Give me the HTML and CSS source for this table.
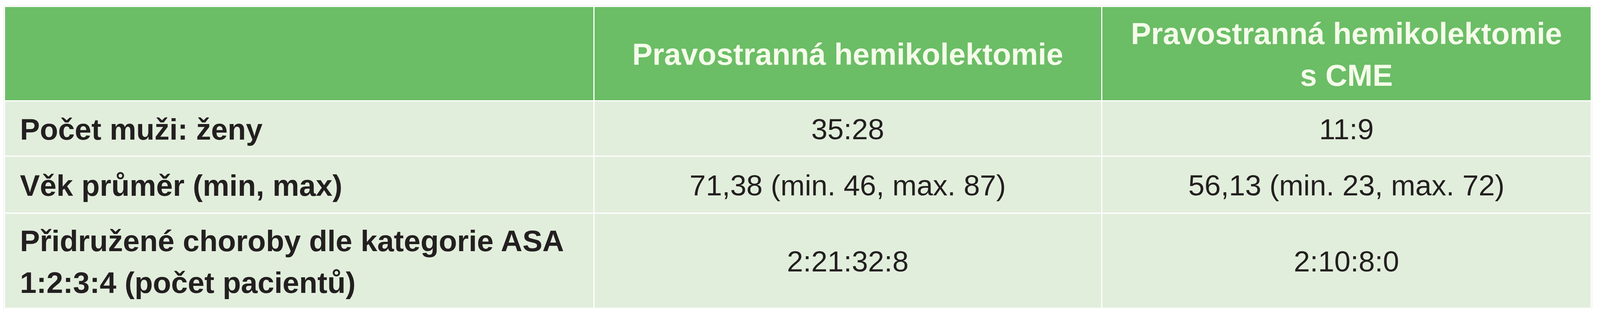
FILE: index.html
```html
<!DOCTYPE html>
<html lang="cs">
<head>
<meta charset="utf-8">
<title>Tabulka</title>
<link rel="stylesheet" href="styles.css">
</head>
<body>
<div class="wrap">
  <table class="data">
    <colgroup>
      <col class="c1">
      <col class="c2">
      <col class="c3">
    </colgroup>
    <thead>
      <tr class="head">
        <th></th>
        <th>Pravostranná hemikolektomie</th>
        <th>Pravostranná hemikolektomie<br>s CME</th>
      </tr>
    </thead>
    <tbody>
      <tr class="r1">
        <td class="label">Počet muži: ženy</td>
        <td class="val">35:28</td>
        <td class="val">11:9</td>
      </tr>
      <tr class="r2">
        <td class="label">Věk průměr (min, max)</td>
        <td class="val">71,38 (min. 46, max. 87)</td>
        <td class="val">56,13 (min. 23, max. 72)</td>
      </tr>
      <tr class="r3">
        <td class="label">Přidružené choroby dle kategorie ASA<br>1:2:3:4 (počet pacientů)</td>
        <td class="val">2:21:32:8</td>
        <td class="val">2:10:8:0</td>
      </tr>
    </tbody>
  </table>
</div>
</body>
</html>
```

FILE: styles.css
```css
html, body {
  margin: 0;
  padding: 0;
  background: #ffffff;
  overflow: hidden;
}

.wrap {
  padding: 15px 0 0 0.234vw;
}

.data {
  border-collapse: collapse;
  table-layout: fixed;
  width: 99.26vw;
  font-family: "Liberation Sans", Arial, sans-serif;
  color: #231f20;
  outline: 1px solid #e3e8df;
}

.c1 { width: 37.15%; }
.c2 { width: 31.99%; }
.c3 { width: 30.86%; }

.data th,
.data td {
  border: 3px solid #ffffff;
  padding: 4px 0 0 0;
  vertical-align: middle;
  line-height: 107px;
  white-space: nowrap;
}

.data th {
  background: #6bbd66;
  color: #f5fcea;
  font-size: 1.894vw;
  font-weight: 700;
  text-align: center;
}

.data td {
  background: #e2eedc;
}

.head { height: 242px; }
.r1 { height: 142px; }
.r2 { height: 146px; }
.r3 { height: 244px; }

.label {
  font-size: 1.87vw;
  font-weight: 700;
  text-align: left;
  padding-left: 0.935vw !important;
}

.val {
  font-size: 1.824vw;
  font-weight: 400;
  text-align: center;
}
```
